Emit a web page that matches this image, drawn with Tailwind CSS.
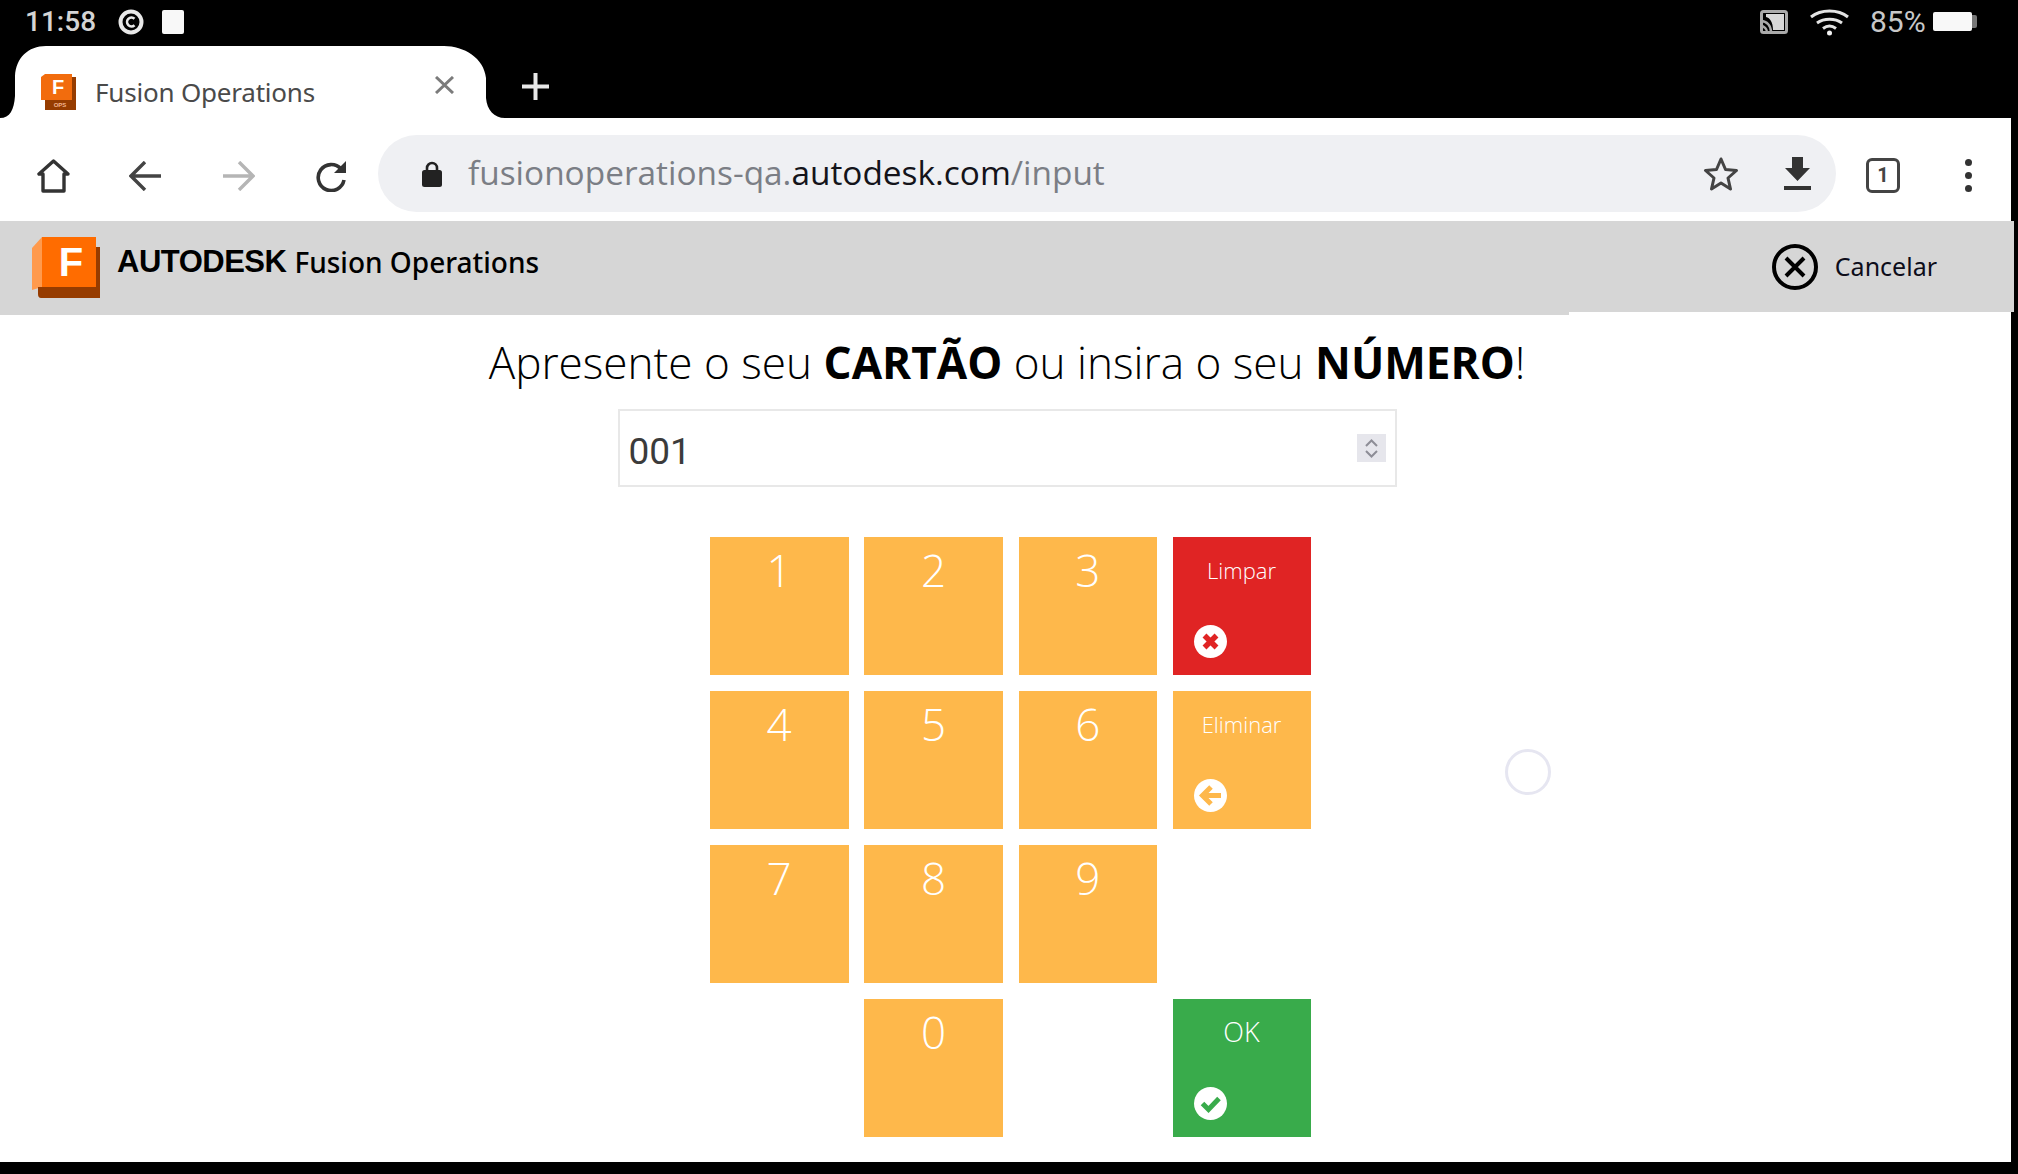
<!doctype html>
<html lang="pt">
<head>
<meta charset="utf-8">
<title>Fusion Operations</title>
<script src="https://cdn.jsdelivr.net/npm/@tailwindcss/browser@4"></script>
</head>
<body class="bg-black">
<div class="w-[2018px] h-[1174px] bg-black overflow-hidden flex flex-col font-['Roboto',sans-serif]">

  <!-- status bar -->
  <div class="h-[46px] flex items-center pl-[25px] pr-[41px] text-[#d4d4d4]">
    <span class="text-[28px] font-medium leading-none w-[71px] mt-[-2px] whitespace-nowrap">11:58</span>
    <svg class="ml-[22px] w-[26px] h-[26px] mt-[-2px]" viewBox="0 0 26 26" fill="none" stroke="#e8e8e8"><circle cx="13" cy="13" r="10.500" stroke-width="4"/><path d="M16.500 9.800a4.400 4.400 0 1 0 0 6.400" stroke-width="2.600"/></svg>
    <div class="ml-[18px] mt-[-3px] w-[22px] h-[24px] bg-[#f8f8f8] rounded-[2px]"></div>
    <svg class="ml-auto w-[28px] h-[24px] mt-[-3px]" viewBox="0 0 28 24" fill="none"><rect x="1.500" y="1.500" width="25" height="21" rx="2" stroke="#aaa" stroke-width="3"/><path d="M6 4h18v16H13C13 12 10 8 6 7z" fill="#d8d8d8"/><path d="M1 11c6 0 10 5 10 11M1 16c3 0 6 3 6 6" stroke="#aaa" stroke-width="2.400"/></svg>
    <svg class="ml-[21px] w-[41px] h-[27px] mt-[-2px]" viewBox="0 0 41 27" fill="none" stroke="#e4e4e4" stroke-width="3"><path d="M2 8C12 0 29 0 39 8"/><path d="M8 14c7-5 18-5 25 0"/><path d="M14 19.500c4-3 9-3 13 0"/><circle cx="20.500" cy="24" r="2.500" fill="#f2f2f2" stroke="none"/></svg>
    <span class="ml-[20px] text-[30px] leading-none text-[#c8c8c8] w-[58px] mt-[-3px] whitespace-nowrap">85%</span>
    <div class="ml-[5px] mt-[-3px] flex items-center">
      <div class="w-[39px] h-[19px] bg-[#f8f8f8] rounded-[2px]"></div>
      <div class="w-[5px] h-[13px] bg-[#777] rounded-r-[2px]"></div>
    </div>
  </div>

  <!-- tab strip -->
  <div class="h-[72px] flex">
    <div class="relative w-[505px] h-[72px]">
      <svg class="absolute inset-0 w-[505px] h-[72px]" viewBox="0 0 505 72"><path d="M0 72C10 72 14 64 15 50V30C16 12 28 0 46 0H444C464 0 484 12 486 32V52C487 64 494 72 505 72Z" fill="#fff"/></svg>
      <div class="relative flex items-center h-[72px] pl-[41px] pt-[20px]">
        <svg class="w-[35px] h-[36px] mt-[-1px]" viewBox="0 0 35 36">
          <path d="M0 3 4 0H31V26H0Z" fill="#f26c0d"/>
          <path d="M31 3h4v33H4V26h27z" fill="#963c00"/>
          <text x="17" y="20" text-anchor="middle" font-family="Liberation Sans" font-weight="700" font-size="20" fill="#fff">F</text>
          <text x="19" y="33" text-anchor="middle" font-family="Liberation Sans" font-weight="700" font-size="6" fill="#f2b48c">OPS</text>
        </svg>
        <span class="ml-[19px] text-[26px] leading-none text-[#4a4a4a] font-['Noto_Sans',sans-serif] tracking-[-0.2px] whitespace-nowrap">Fusion Operations</span>
        <svg class="absolute left-[435px] top-[30px] w-[19px] h-[18px]" viewBox="0 0 19 18" stroke="#7b7b7b" stroke-width="3"><path d="M1 1 18 17M18 1 1 17"/></svg>
      </div>
    </div>
    <svg class="ml-[17px] mt-[27px] w-[27px] h-[27px]" viewBox="0 0 27 27" stroke="#e8e8e8" stroke-width="4"><path d="M13.500 0v27M0 13.500h27"/></svg>
  </div>

  <!-- browser page -->
  <div class="w-[2011px] h-[1044px] bg-white flex flex-col">
    <!-- toolbar -->
    <div class="h-[103px] flex items-center pt-[10px]">
      <svg class="ml-[37px] w-[33px] h-[34px] mt-[3px]" viewBox="0 0 33 34" fill="none" stroke="#333" stroke-width="3.400" stroke-linejoin="round"><path d="M16.500 2 2 15H6V32H27V15H31Z"/></svg>
      <svg class="ml-[59px] w-[32px] h-[30px] mt-[2px]" viewBox="0 0 32 30" fill="none" stroke="#444" stroke-width="3.400"><path d="M32 15H3M16 1 2 15l14 14"/></svg>
      <svg class="ml-[62px] w-[32px] h-[30px] mt-[2px]" viewBox="0 0 32 30" fill="none" stroke="#b5b5b5" stroke-width="3.400"><path d="M0 15h29M16 1l14 14-14 14"/></svg>
      <svg class="ml-[60px] w-[32px] h-[32px] mt-[3px]" viewBox="0 0 32 32" fill="none"><path d="M26 9A13 13 0 1 0 29 20" stroke="#333" stroke-width="3.600"/><path d="M31 1V13H19Z" fill="#333"/></svg>
      <div class="ml-[31px] w-[1458px] h-[77px] mt-[-2px] bg-[#eff0f3] rounded-[39px] flex items-center pl-[44px]">
        <svg class="w-[20px] h-[26px]" viewBox="0 0 20 26"><path d="M5 10V7a5 5 0 0 1 10 0v3" fill="none" stroke="#222" stroke-width="2.600"/><rect y="9" width="20" height="17" rx="2.500" fill="#222"/></svg>
        <span class="ml-[26px] mt-[-2px] text-[33.400px] leading-none text-[#7b7e85] font-['Open_Sans',sans-serif] whitespace-nowrap">fusionoperations-qa.<span class="text-[#14141a]">autodesk.com</span>/input</span>
        <svg class="ml-auto w-[36px] h-[35px]" viewBox="0 0 36 35" fill="none" stroke="#444" stroke-width="3" stroke-linejoin="round"><path d="M18 3 22.500 13.500 33.500 14.500 25 22 27.500 33 18 27 8.500 33 11 22 2.500 14.500 13.500 13.500Z"/></svg>
        <svg class="ml-[45px] mr-[25px] w-[27px] h-[33px]" viewBox="0 0 27 33"><path d="M8 0H19V11H26L13.500 24 1 11H8Z" fill="#333"/><rect y="29" width="27" height="4" fill="#333"/></svg>
      </div>
      <div class="ml-[30px] mt-[1px] w-[34px] h-[35px] border-[3px] border-[#444] rounded-[6px] flex items-center justify-center text-[20px] font-bold leading-none text-[#444]">1</div>
      <div class="ml-[65px] flex flex-col gap-[6px] mt-[1px]">
        <div class="w-[7px] h-[7px] rounded-full bg-[#333]"></div>
        <div class="w-[7px] h-[7px] rounded-full bg-[#333]"></div>
        <div class="w-[7px] h-[7px] rounded-full bg-[#333]"></div>
      </div>
    </div>

    <!-- app header -->
    <div class="w-[2014px] h-[91px] shrink-0 bg-[#d6d6d6] flex pl-[32px]">
      <svg class="mt-[16px] w-[68px] h-[61px]" viewBox="0 0 68 61">
        <path d="M0 11 10 0V50L0 53Z" fill="#ff9a4d"/>
        <path d="M10 0H64V50H10Z" fill="#ff6c00"/>
        <path d="M64 10H68V61H9Q6 61 6 57V50H64Z" fill="#963c00"/>
        <text x="39" y="39" text-anchor="middle" font-family="Liberation Sans" font-weight="700" font-size="40" fill="#fff">F</text>
      </svg>
      <span class="ml-[17px] mt-[23px] text-[31px] leading-[36px] text-black font-bold font-['Liberation_Sans',sans-serif] tracking-[-0.5px] whitespace-nowrap">AUTODESK</span>
      <span class="ml-[8px] mt-[23px] text-[28px] leading-[36px] text-black font-medium font-['Noto_Sans',sans-serif] whitespace-nowrap">Fusion Operations</span>
      <div class="ml-auto flex items-center pr-[77px]">
        <svg class="w-[46px] h-[46px]" viewBox="0 0 46 46" fill="none" stroke="#000"><circle cx="23" cy="23" r="21" stroke-width="4"/><path d="M14 14 32 32M32 14 14 32" stroke-width="4"/></svg>
        <span class="ml-[17px] text-[25px] leading-none text-[#0d0d1a] font-['Noto_Sans',sans-serif] whitespace-nowrap">Cancelar</span>
      </div>
    </div>
    <div class="w-[1569px] h-[3px] shrink-0 bg-[#d6d6d6]"></div>

    <!-- main -->
    <div class="relative flex-1 flex flex-col items-center font-['Open_Sans',sans-serif] pl-[3px]">
      <h1 class="mt-[19px] text-[44.100px] leading-[56px] font-light text-black whitespace-nowrap">Apresente o seu <b class="font-bold">CARTÃO</b> ou insira o seu <b class="font-bold">NÚMERO</b>!</h1>
      <div class="mt-[19px] w-[779px] h-[78px] border-2 border-[#e8e8e8] flex items-center pl-[9px] pr-[9px]">
        <span class="text-[37px] leading-none text-[#3b3b3b] font-['Roboto',sans-serif] pt-[7px]">001</span>
        <div class="ml-auto w-[29px] h-[28px] bg-[#e6e6ec] flex flex-col items-center justify-center gap-[3px]">
          <svg class="w-[13px] h-[8px]" viewBox="0 0 13 8" fill="none" stroke="#8d8d96" stroke-width="2"><path d="M1 7 6.500 1.500 12 7"/></svg>
          <svg class="w-[13px] h-[8px]" viewBox="0 0 13 8" fill="none" stroke="#8d8d96" stroke-width="2"><path d="M1 1l5.500 5.500L12 1"/></svg>
        </div>
      </div>

      <div class="mt-[50px] ml-[6px] grid grid-cols-[139px_139px_138.5px_138px] auto-rows-[138px] gap-x-[15.5px] gap-y-[16px] text-white text-center font-light">
        <div class="bg-[#feb84b] text-[44px] leading-[66px]">1</div>
        <div class="bg-[#feb84b] text-[44px] leading-[66px]">2</div>
        <div class="bg-[#feb84b] text-[44px] leading-[66px]">3</div>
        <div class="bg-[#e02424] flex flex-col">
          <span class="text-[22px] leading-[66px]">Limpar</span>
          <svg class="mt-[22px] ml-[21px] w-[33px] h-[33px]" viewBox="0 0 33 33"><circle cx="16.500" cy="16.500" r="16.500" fill="#fff"/><path d="M10.500 10.500 22.500 22.500M22.500 10.500 10.500 22.500" stroke="#e02424" stroke-width="5.500"/></svg>
        </div>
        <div class="bg-[#feb84b] text-[44px] leading-[66px]">4</div>
        <div class="bg-[#feb84b] text-[44px] leading-[66px]">5</div>
        <div class="bg-[#feb84b] text-[44px] leading-[66px]">6</div>
        <div class="bg-[#feb84b] flex flex-col">
          <span class="text-[22px] leading-[66px]">Eliminar</span>
          <svg class="mt-[22px] ml-[21px] w-[33px] h-[33px]" viewBox="0 0 33 33" fill="none"><circle cx="16.500" cy="16.500" r="16.500" fill="#fff"/><path d="M27 16.500H9M17 8l-8.500 8.500L17 25" stroke="#feb84b" stroke-width="5"/></svg>
        </div>
        <div class="bg-[#feb84b] text-[44px] leading-[66px]">7</div>
        <div class="bg-[#feb84b] text-[44px] leading-[66px]">8</div>
        <div class="bg-[#feb84b] text-[44px] leading-[66px]">9</div>
        <div></div>
        <div></div>
        <div class="bg-[#feb84b] text-[44px] leading-[66px]">0</div>
        <div></div>
        <div class="bg-[#39ab4b] flex flex-col">
          <span class="text-[27px] leading-[66px]">OK</span>
          <svg class="mt-[22px] ml-[21px] w-[33px] h-[33px]" viewBox="0 0 33 33" fill="none"><circle cx="16.500" cy="16.500" r="16.500" fill="#fff"/><path d="M8.500 16.500 14.500 22.500 25 11.500" stroke="#39ab4b" stroke-width="5"/></svg>
        </div>
      </div>

      <div class="absolute left-[1505px] top-[434px] w-[46px] h-[46px] rounded-full border-[3px] border-[#e6e6f1]"></div>
    </div>
  </div>
</div>
</body>
</html>
